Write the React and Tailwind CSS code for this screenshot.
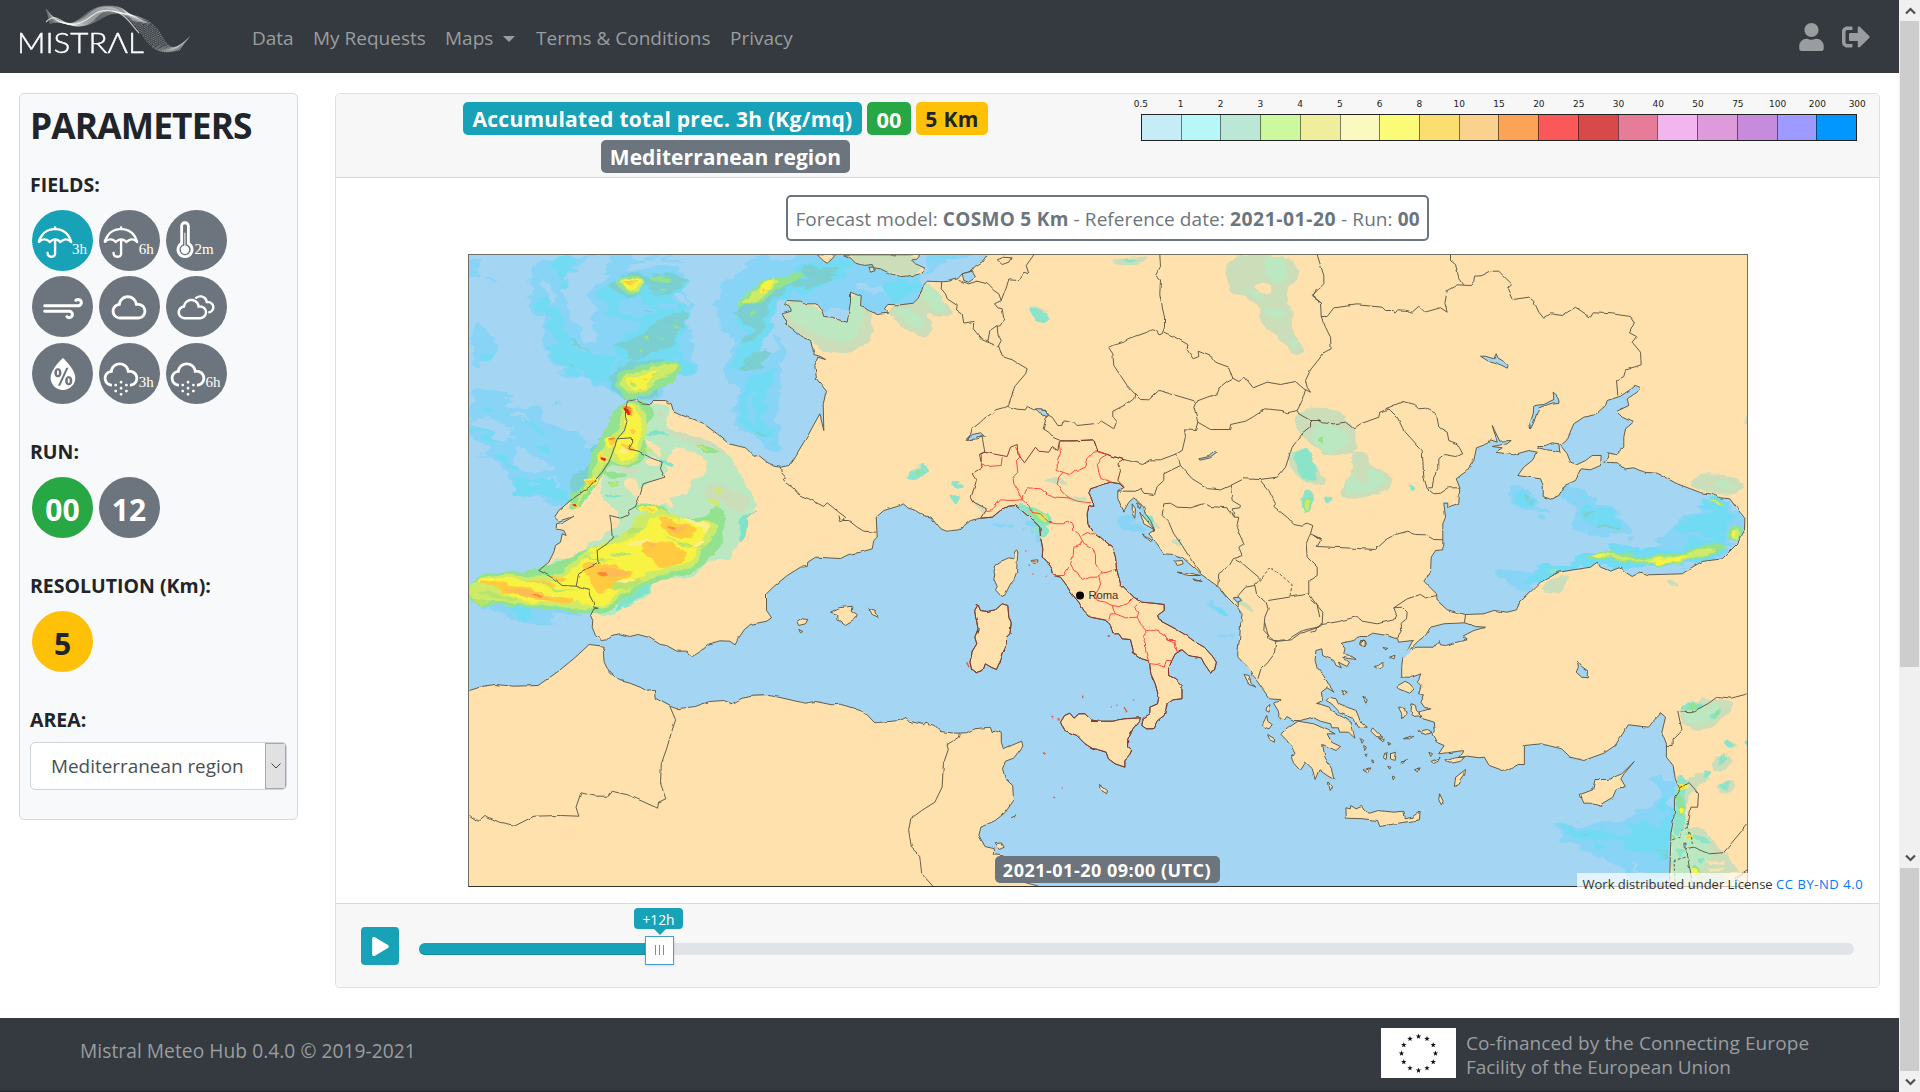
import React from "react";
import { FaUser, FaSignOutAlt, FaPlay } from "react-icons/fa";
import {
  WiUmbrella,
  WiThermometer,
  WiStrongWind,
  WiCloud,
  WiCloudy,
  WiSnow,
  WiHumidity,
} from "react-icons/wi";

/* Chart sheets: origin x, origin y, units per pixel in x and y */
const SHEETS = {
  A: [460, 250, 3, 3],
  B: [880, 250, 3, 3],
  C: [1310, 250, 3, 3],
  D: [460, 600, 2.45, 3],
  E: [1090, 560, 2.24, 3],
};

/* "B 10,20 30,40 C 5,6" -> a list of map points; a letter switches the sheet */
function points(text) {
  let s = SHEETS.A;
  const out = [];
  for (const t of text.trim().split(/\s+/)) {
    if (SHEETS[t]) s = SHEETS[t];
    else {
      const [x, y] = t.split(",").map(Number);
      out.push([s[0] + x / s[2], s[1] + y / s[3]]);
    }
  }
  return out;
}
const line = (t) => "M" + points(t).map((p) => p[0].toFixed(1) + " " + p[1].toFixed(1)).join("L");
const area = (t) => line(t) + "Z";
function blob(t) {
  const p = points(t);
  const mid = (a, b) => ((a[0] + b[0]) / 2).toFixed(1) + " " + ((a[1] + b[1]) / 2).toFixed(1);
  let d = "M" + mid(p[p.length - 1], p[0]);
  p.forEach((q, i) => {
    d += "Q" + q[0].toFixed(1) + " " + q[1].toFixed(1) + " " + mid(q, p[(i + 1) % p.length]);
  });
  return d + "Z";
}

const COAST = `B 320,13 304,35 283,48 272,62 245,70 232,85 205,92 184,94 140,92 128,105 122,125 112,145 98,158 60,163 22,162 12,175 25,188 5,190
A 1250,192 1225,180 1200,165 1202,138 1182,130 1170,125 1170,155 1160,215 1135,208 1115,200 1090,198 1080,168 1065,160 1040,160 1020,152 980,150 972,162 990,172 992,182 965,190 975,210 975,220 1000,238 1020,255 1050,270 1055,290 1062,300 1060,312 1080,318 1095,327 1072,320 1063,345 1068,385 1098,422 1088,460 1090,540 1078,490 1045,550 1030,575 1000,625 985,645 960,650 940,647 920,635 895,615 880,617 855,592 805,580 770,550 725,517 680,500 640,485 632,460 615,450 578,450 572,460 542,457 525,448 500,452 495,480 495,500 500,510 492,540 470,565 455,610 445,635 425,665 385,710 330,750 295,780 282,800 295,812 340,797 310,815 288,820 287,835 310,840 317,855 305,850 300,875 285,885 280,905 265,935 235,960 255,970 280,985 305,1005 347,1007 370,1015 385,1020 388,1035 398,1055 400,1070 413,1073 400,1075 390,1095 397,1110 395,1130 405,1155 422,1170
D 345,120 358,118 370,105 390,100 415,108 435,102 460,110 490,132 505,135 530,152 552,152 568,168 585,155 605,132 635,121 660,122 673,133 680,115 695,88 710,72 750,62 762,52 750,30
A 918,1080 918,1030 940,1008 980,975 1020,950 1040,948 1042,935 1065,920 1140,924 1165,912 1200,905 1235,895 1240,870 1250,860 1247,800 1270,780 1320,765
B 68,760 82,772 105,780 128,795 152,800 175,832 198,842 235,838 270,810 300,803 335,800 360,780 385,767 405,765 435,790 460,812 478,830 480,860 487,895 485,920 497,930 515,955 520,975 540,980 555,1000 570,1025 595,1055 610,1080 630,1100 680,1110 690,1125 697,1150 715,1150 725,1165 750,1168 758,1200
E 95,275 115,295 132,302 135,340 145,370 153,410 150,430 133,440 133,460 118,473 115,495 125,505 140,505 150,480 165,465 172,430 185,418 205,415 205,375 190,355 175,345 175,325 182,300 190,280 205,268 220,285 248,292 255,310 268,335 278,328 282,305 272,285 255,260 235,245 215,225 190,205 155,180 150,165 165,150 165,132 140,128 115,125
B 760,1040 720,1000 708,955 705,920 695,890 665,865 635,840 622,820 620,790 625,765 637,768 635,750 625,730 630,715 645,710 690,695 718,700 730,712 712,720 712,745 730,782 745,755 760,742 775,755 790,770 795,790 810,810 822,838 805,850 830,880 850,910 880,912 905,920 960,970 1015,1010 1040,1040 1070,1070 1085,1090 1080,1120 1078,1160 1072,1200
E 330,290 345,310 358,330 362,345 372,360 385,385 402,415 427,418 410,428 420,450 425,475 435,478 440,468 455,480 470,480 498,470 515,482 538,490 540,502 555,502 558,515 578,515 592,533 585,490 565,470 540,452 535,440 508,428 520,420 517,395 530,382 545,395 535,375 522,345 508,325 503,300 505,270 518,265 520,285 545,300 550,315 562,322 555,305 575,318 580,305 565,290 595,298 580,285 567,280 570,265 562,248 590,240 600,228 620,228 632,218 665,225 688,235 690,245 722,240 712,265 700,290 697,320 697,350 720,350 740,340 732,365 740,375 735,400 748,403 740,425 748,440 760,445 735,455 745,475 770,485 772,510 765,520 775,545 792,555 780,580 800,577 835,570 825,590 845,587 870,592 882,590 893,615 930,633 958,612 972,612 972,555 1010,550 1055,565 1075,590 1105,600 1150,578 1175,555 1205,493 1250,500 1262,480 1278,458 1288,470 1280,515 1290,550 1290,590 1305,615 1310,655 1320,690 1308,715 1308,760 1300,820 1297,978`;

const AFRICA = `D 22,270 55,257 85,252 130,257 190,255 240,212 280,172 315,132 352,137 350,155 352,185 365,218 390,240 415,248 440,260 455,270 475,266 477,293 515,318 530,325 575,318 610,303 645,300 665,310 690,293 715,287 755,285 780,290 815,300 845,308 870,303 910,313 930,311 960,322 990,335 1015,367 1075,360 1090,350 1100,362 1135,373 1140,365 1160,375 1175,393 1210,398 1240,397 1258,385 1298,380 1303,397 1310,388 1325,395 1325,425 1330,445 1375,422 1378,437 1355,473 1335,482 1328,505 1335,535 1353,555 1355,600 1335,635 1310,660 1275,680 1270,705 1285,738 1308,745 1308,760 1330,763 1345,830 1370,842 1420,858`;

const BLACK_SEA = `C 465,1092 410,1078 380,1050 378,1030 340,992 360,965 362,920 375,900 397,898 397,820 405,800 400,755 412,755 412,770 445,758 448,712 437,685 470,660 490,630 498,592 535,578 540,568 560,575 545,525 568,572 602,570 590,580 545,588 575,592 555,605 610,613 655,600 680,605 665,630 640,650 622,675 655,680 690,685 698,705 698,738 720,746 745,735 762,705 795,690 812,655 840,658 870,645 872,615 845,615 825,630 800,642 780,635 770,610 750,585 768,570 790,520 820,500 855,492 885,465 890,450 930,437 955,420 972,405 988,412 980,425 950,445 955,465 918,483 935,500 968,515 945,535 940,560 940,590 915,612 890,607 895,620 882,635 920,637 945,655 970,652 1000,665 1040,668 1100,700 1140,715 1175,728 1200,730 1230,742 1258,745 1280,775 1303,803 1302,840 1280,880 1235,925 1175,933 1145,950 1115,970 1015,973 990,965 965,978 945,965 930,950 900,962 870,950 860,935 840,950 745,965 690,995 628,1055 618,1078 590,1085 550,1080 520,1090`;

const WATERS = [
  "C 462,1117 400,1120 360,1130 345,1155 325,1170 300,1195 320,1190 350,1190 368,1190 385,1170 390,1183 405,1185 450,1172 470,1168 455,1158 490,1140 525,1130 495,1128",
  "C 510,317 525,317 550,325 557,310 562,322 580,333 593,345 590,353 575,345 550,335 530,330",
  "C 728,425 740,435 746,455 725,458 685,472 668,520 660,535 658,520 668,490 670,465 700,462 730,447",
  "C 682,585 705,585 725,577 745,580 748,605 730,600 705,598 685,592",
  "B 465,475 480,475 503,495 497,501 480,490",
  "B 258,565 275,552 300,547 315,560 290,558 268,568",
  "B 955,625 985,618 1003,603 1010,607 990,622 958,629",
  "E 1090,302 1100,318 1115,332 1115,352 1100,350 1088,335 1093,320",
  "B 1058,1042 1075,1040 1083,1050 1070,1055",
  "E 1329,848 1334,848 1334,864 1330,862",
  "B 245,70 275,62 285,80 265,95 250,90",
];

const ISLANDS = [
  "A 1150,13 1170,22 1185,38 1210,45 1235,42 1240,52 1260,55 1290,70 B 62,78 100,75 125,68 132,52 105,40 92,28 108,27 120,13",
  "A 1225,50 1238,50 1243,58 1230,62",
  "A 1070,13 1078,20 1090,32 1100,38 1112,28 1125,13",
  "B 408,898 412,905 408,965 400,990 390,1000 375,1030 366,1042 345,1018 350,1008 340,985 343,970 337,965 343,945 362,932 385,922 400,925 402,905",
  "B 292,1062 300,1080 320,1083 345,1078 365,1060 382,1065 385,1100 392,1120 388,1150 378,1160 D 1337,130 1325,175 1313,207 1300,200 1286,190 1280,210 1265,217 1253,210 1248,185 1255,150 1265,130 1260,110 1268,85 1262,50 1260,30",
  "D 1470,365 1480,345 1493,338 1503,353 1515,340 1530,340 1545,358 1560,362 E 0,482 50,482 75,475 112,472 110,480 95,505 83,540 83,560 92,570 85,590 77,600 77,620 55,610 40,595 35,575 18,568 0,563 D 1552,447 1530,430 1510,405 1490,395 1478,388",
  "E 430,515 445,500 465,482 500,490 530,508 548,520 530,520 540,545 560,558 550,570 520,552 525,590 540,625 545,657 530,645 512,628 503,657 497,625 482,605 470,630 455,608 450,590 458,575 440,540 427,522",
  "E 535,410 550,415 555,430 575,440 595,450 605,485 620,500 600,500 590,475 560,458 540,430 528,420",
  "E 572,742 582,745 583,735 595,745 607,738 615,752 625,758 645,750 680,755 702,752 705,775 720,770 738,752 737,778 690,788 648,798 643,780 610,775 573,773",
  "E 1097,702 1125,688 1130,657 1160,657 1190,640 1218,603 1195,640 1188,655 1198,678 1178,685 1170,710 1145,730 1145,738 1120,728 1105,728",
  "A 1110,1085 1135,1072 1175,1067 1172,1080 1190,1092 1183,1108 1155,1125 1132,1108 1132,1092",
  "A 1225,1073 1245,1080 1253,1100 1235,1092",
  "A 1010,1115 1025,1105 1042,1107 1035,1120 1015,1125",
  "A 1015,1137 1027,1143 1020,1147",
  "E 685,378 705,362 715,370 725,385 715,398 690,385",
  "E 690,440 703,440 707,458 697,475 697,460",
  "E 720,430 728,435 730,450 745,465 722,468 718,450",
  "E 735,512 755,507 765,515 750,522",
  "E 815,678 818,650 840,627 838,645 825,672",
  "E 795,602 815,592 838,590 828,603 805,608",
  "E 782,700 790,722 786,733 780,718",
  "E 763,603 783,590 780,598 768,607",
  "E 632,502 645,520 655,530 640,528 628,512",
  "E 645,532 658,538 655,544",
  "E 703,535 722,524 715,535",
  "E 672,580 683,575 680,600 672,595",
  "E 658,582 664,580 662,597 656,592",
  "E 605,535 612,540 608,548",
  "E 612,555 618,560 614,570",
  "E 615,578 622,580 618,588",
  "E 613,628 625,622 622,635",
  "E 666,617 673,620 670,626",
  "E 726,628 736,622 732,634",
  "E 676,647 682,650 678,658",
  "E 695,610 710,597 703,606",
  "E 630,598 635,602 631,606",
  "E 666,545 673,550 668,554",
  "E 758,575 766,580 762,588",
  "E 533,665 542,678 537,690",
  "E 385,492 395,465 397,482 407,492 400,505 390,500",
  "E 395,440 402,432 400,455 393,450",
  "E 397,522 412,535 412,545 400,537",
  "E 344,342 355,345 360,370 368,380 355,372",
  "E 635,318 645,315 655,305 655,318 648,328",
  "E 670,290 682,284 680,295",
  "E 605,240 615,240 615,255 606,253",
  "E 655,261 667,264 663,270",
  "E 610,410 620,418 617,428",
  "E 563,390 575,398 568,403",
  "E 20,672 38,690 36,700 25,690",
  "B 755,760 765,775 763,803 755,790",
  "B 768,755 782,765 778,775",
  "B 778,785 822,838 790,820",
  "B 785,850 815,870 810,873",
  "B 880,932 905,930 908,940 890,945",
  "B 893,965 930,968 960,975 920,975",
  "B 940,985 965,993 945,990",
  "B 452,930 472,928 472,935 455,935",
  "D 1310,730 1325,727 1332,740 1320,747",
  "D 1350,648 1360,643 1356,652",
  "C 148,1175 160,1168 168,1178 160,1187 148,1183",
  "B 350,28 370,20 392,22 385,35 365,42",
];

const BORDERS = [
  "B 184,94 182,115 195,130 200,145 230,165 228,178 245,190 250,218 280,212 278,235 305,268 322,275 355,288 365,318 395,328 440,355 435,370 405,405 382,468",
  "B 322,275 328,240 350,225 352,250 362,270 352,290",
  "B 235,90 265,100 290,92 320,100 340,120 355,130 362,150 342,160 352,172 365,175 370,205 360,225 350,228",
  "B 362,150 385,88 415,90 430,65 445,70 437,45 460,13",
  "B 382,468 345,478 340,485 310,505 300,515 275,535 270,552 257,570 275,568 305,560 313,605 297,612",
  "B 382,468 410,476 435,478 440,468 460,478 485,475 500,492 515,500 532,525 547,525 552,508 580,515 590,525 655,518 660,510 700,535 707,517 697,505 697,482 740,460 760,445 763,430",
  "B 500,492 488,535 505,545 520,562 540,570",
  "B 838,13 840,48 825,75 840,88 838,130 845,170 852,200 852,230 845,250",
  "B 845,250 835,253 828,238 815,235 800,245 745,265 730,275 698,285 685,292 697,310 700,345 720,375 740,405 763,430 780,447 805,448 835,420 870,430 945,452",
  "B 850,245 880,258 922,282 920,298 938,325 955,318 953,302 992,318 1005,335 1045,350 1057,383 1040,392 1018,410 1010,430 980,440 948,452 940,470 952,515",
  "B 1057,383 1075,393 1093,380 1118,412 1160,395 1200,402 1245,393 1270,415 1290,425",
  "B 1275,418 1265,450 1250,480 1255,490 1290,510",
  "B 952,515 990,537 1048,537 1050,522 1095,512 1120,498 1152,475 1205,480 1220,487 1250,480",
  "B 952,515 945,540 912,538 915,558 905,600 888,610 900,645 935,685 985,715 1020,718 1050,705 1090,685 1137,687 1190,680 1215,650 1235,590 1265,550 1290,530 1290,510 1320,510 C 20,508 35,517 70,520 105,515 130,535 150,520 205,500 208,485 235,475",
  "B 888,610 840,628 808,628 787,642 740,630 680,612 652,603 640,568 575,572 540,570",
  "B 900,645 850,670 850,690 830,708 822,732 790,728 780,713 765,722 712,722",
  "B 1137,687 1165,720 1185,760 1180,768 1222,802 1240,822 1265,827 1280,818 1297,825 1290,850 1320,865 C 10,855 30,870 20,888 125,893 195,897 225,870 255,852 292,842 315,852 345,853 370,867 397,868",
  "B 1050,705 1055,750 1080,765 1078,772 1055,775 1062,800 1075,800 1068,832 1090,880 1075,890 1085,915 1058,925 1047,945 1015,970 1012,1005",
  "B 1062,800 1040,772 990,768 970,760 930,772 890,770 870,758 850,760 845,795 865,815 880,850 905,885 930,925 960,968",
  "B 1290,850 1285,860 1277,880 1280,920 1310,950 1310,975 1285,990 1285,1030",
  "B 1065,928 1090,942 1140,985 1122,1005 1095,1010 1073,1035 1073,1070",
  "B 1122,1000 1128,1030 1155,1055 1163,1075 1153,1100 1150,1140 1180,1170 1220,1168 1265,1140 1320,1128",
  "B 1163,1050 1225,1040 1285,1030 1310,1065 1318,1100",
  "C 0,1048 20,1065 37,1085 35,1122 85,1113 140,1098 155,1112 200,1120 250,1108 257,1090 250,1072 290,1045 330,1032 345,1042 378,1035",
  "C 250,1072 275,1070 290,1085 288,1105 272,1118 273,1140 258,1165",
  "C 35,1122 20,1130 15,1142 0,1145",
  "E 390,185 400,235 415,243 450,238 470,218 490,210 520,195",
  "E 415,243 412,280 395,310 382,325 375,355",
  "C 20,13 40,75 40,100 5,135 30,155 32,198 50,198 70,172 140,163 215,170 225,180 248,180 253,188 262,178 290,180 305,185 325,167 343,185 390,172 410,185 403,160 410,120 440,103 480,105 490,92 492,77 515,75 540,62 565,62 603,100 592,110 608,147 655,140 670,152 685,185 700,203 720,190 755,195 795,170 840,200 848,187 905,190 960,198 972,215 957,247 978,258 965,275 990,305 992,343 945,358 940,378 918,390 922,435",
  "C 420,13 420,30 435,42 445,82 460,103",
  "C 32,198 45,230 60,260 62,295 42,305 0,358 B 1275,390 1280,410 1290,425",
  "B 1320,112 1308,115 1297,140 1320,155",
  "C 225,475 278,453 310,462 325,475 345,473 378,490 385,530 410,545 415,570 440,580 457,610 435,618 400,612 385,625 385,655 370,680 365,712 353,712",
  "C 235,475 260,500 280,540 335,600 340,680 350,715 370,730 390,728 415,712 448,712",
  "A 960,650 962,665 975,680 968,688 1000,712 1020,735 1045,745 1090,768 1100,757 1135,785 1155,800 1150,810 1165,810 1190,830 1210,842 1247,845",
  "A 1135,795 1140,810 1155,808",
  "A 470,565 515,562 517,575 505,595 535,602 570,622 605,635 600,655 613,680 548,700 540,730 525,768 505,780 500,795 480,803 448,795 452,820 455,862 440,880 410,900 412,930 420,937 385,952 355,970 347,1007",
  "D 22,645 43,662 60,645 95,665 135,675 180,647 245,645 290,647 283,620 295,577 330,587 360,587 370,572 410,583 483,623 485,605 503,595 490,548 492,490 505,445 517,395 527,358 513,318",
  "D 1222,398 1220,410 1192,433 1195,447 1183,490 1180,560 1162,605 1130,630 1103,655 1098,690 1105,742 1125,765 1130,820 1158,858",
  "E 1472,400 1435,413 1405,408 1385,428 1345,457 1315,453 1325,508 1305,535 1305,555 1290,555",
  "E 1320,685 1340,665 1350,680 1362,700 1360,740 1345,740 1342,765 1338,800",
  "E 1335,865 1350,860 1385,880 1418,877 1472,790",
  "E 1335,865 1340,910 1350,978",
  "E 1472,930 1445,955 1472,978",
];

const DASHED = [
  "B 1145,982 1168,950 1195,968 1235,1003 1228,1038",
  "E 1122,688 1155,675 1195,680",
  "E 1338,800 1322,810 1320,830 1303,838",
  "E 1338,800 1346,830 1348,850",
  "E 1310,978 1307,900 1338,888",
];

const REGIONS = [
  "B 303,612 303,640 320,648 362,645 365,620",
  "B 405,590 420,618 408,630 412,665 398,680 400,700 412,720 425,748",
  "B 318,780 335,778 360,748 390,750 425,748 445,765 455,785 480,790 505,815 530,820",
  "B 425,748 440,712 480,715 500,730 530,740 565,742 590,752 628,757",
  "B 535,575 540,605 530,630 530,660 548,665 535,680 530,700 545,725 570,745",
  "B 548,665 565,672 580,660 598,658 615,650 622,625 640,605 655,603",
  "B 655,603 680,612 662,622 650,640 655,665 660,680 690,695",
  "B 530,820 545,820 560,812 578,822 580,838 595,850 605,870 612,880 635,890 645,915 645,940 662,968 650,980",
  "B 605,855 620,846 630,850 645,850",
  "B 605,870 598,885 580,890 578,915 570,940 580,960 590,965 605,990 630,980 650,980",
  "B 520,975 550,975 565,950",
  "B 662,968 680,965 705,957",
  "B 655,975 660,1000 655,1015 645,1030 650,1050 675,1055 695,1065 715,1068 740,1060 760,1040",
  "B 695,1065 700,1080 705,1090 690,1090 685,1108",
  "B 705,1090 735,1102 770,1100 775,1085 762,1070 780,1053",
  "B 770,1100 780,1120 790,1130 800,1140 830,1135 840,1150 865,1170 885,1180 890,1200",
  "B 800,1140 787,1160 795,1180 795,1200 E 130,302 135,310 150,312 165,320 170,300 183,300",
  "E 165,222 172,240 190,240 188,258 195,275",
];

const ITALY_EDGE = [
  "B 297,612 310,605 380,618 390,590 410,582 412,610 432,637 465,590 475,602 505,605 515,588 532,600 538,572 640,568 652,603 730,628 712,640 720,660 712,690 732,710",
  "B 297,612 305,650 275,670 288,690 280,715 272,740 280,755 318,775 300,803",
  "B 300,803 335,800 360,780 385,767 405,765 435,790 460,812 478,830 480,860 487,895 485,920 497,930 515,955 520,975 540,980 555,1000 570,1025 595,1055 610,1080 630,1100 680,1110 690,1125 697,1150 715,1150 725,1165 750,1168 758,1200 E 95,275 115,295 132,302 135,340 145,370 153,410 150,430 133,440 133,460 118,473 115,495 125,505 140,505 150,480 165,465 172,430 185,418 205,415 205,375 190,355 175,345 175,325 182,300 190,280 205,268 220,285 248,292 255,310 268,335 278,328 282,305 272,285 255,260 235,245 215,225 190,205 155,180 150,165 165,150 165,132 140,128 115,125 B 760,1040 720,1000 708,955 705,920 695,890 665,865 635,840 622,820 620,790 625,765 637,768 635,750 625,730 630,715 645,710 690,695 718,700 730,712",
];

/* Rain bands, each a colour and its blobs */
const RAIN_SEA = [
  ["#87d4f6", [
    "A 210,13 700,13 640,90 690,120 690,200 690,240 720,340 640,400 610,450 480,450 400,400 330,380 240,300 260,220 200,150",
    "A 27,190 70,220 100,270 90,340 60,350 27,330",
    "A 27,390 100,440 240,480 310,550 440,600 400,700 320,760 200,740 130,680 100,640 27,600",
    "A 760,100 880,40 990,5 1240,5 1400,60 1400,170 1240,200 1060,170 960,150 940,250 1000,330 940,440 970,600 880,590 810,490 830,400 790,370 820,260 770,200",
    "A 27,40 50,30 60,60 40,75", "A 60,60 110,90 120,110 70,90", "A 27,1040 240,1060 400,1090 260,1105 190,1120 120,1090",
    "B 0,60 60,70 130,90 150,40 300,13 240,5 120,5 130,60 110,150 0,190",
    "C 590,680 700,760 710,790 650,800 600,760", "C 740,700 820,720 960,820 990,860 900,870 800,840 780,820 830,800 740,740",
    "C 560,960 640,950 740,960 860,900 1030,900 1100,810 1180,740 1260,750 1310,810 1290,880 1230,925 1120,960 900,930 740,970 640,1030 580,990",
    "E 1250,640 1310,650 1310,978 1230,978 1130,880 1040,820 1030,790 1190,790 1290,720",
    "B 430,790 500,820 500,860 450,850", "B 330,810 400,820 390,835 340,825", "B 970,1030 1020,1050 1050,1110 1010,1100", "B 700,800 790,820 800,870 730,840", "B 760,740 800,790 830,840 790,800",
    "B 970,1145 1060,1165 1050,1180",
  ]],
  ["#a4d6f3", [
    "A 27,480 120,510 200,560 120,560 60,530", "A 150,600 300,640 260,670 170,640", "A 200,690 300,700 280,715", "A 27,560 90,600 80,620 27,590", "A 120,470 220,510 180,520", "A 60,400 120,430 90,440",
    "A 350,20 480,15 430,60 400,110 380,230 440,260 380,270 330,210 310,130", "A 470,60 560,20 620,20 560,60", "A 300,320 380,350 350,370", "A 640,120 690,150 650,170", "A 560,40 700,30 660,70",
    "A 240,80 290,130 280,180 240,120", "A 960,200 940,320 880,310 930,200", "A 1160,90 1280,100 1320,140 1220,130", "A 780,20 860,13 820,50", "A 840,220 870,190 850,260",
    "A 860,420 900,400 890,470", "C 1080,780 1160,770 1180,790 1100,800", "C 830,760 900,790 880,800",
    "E 1180,820 1260,800 1240,815", "E 1200,900 1260,930 1230,935",
  ]],
  ["#72dbf4", [
    "A 290,10 345,10 320,130", "A 210,120 270,150 300,230 370,290 480,330 420,410 330,370 240,290 310,290",
    "A 410,120 520,65 640,75 700,105 600,145 660,160 690,200 680,240 620,300 720,340 640,400 480,450 420,400 490,340 440,290 550,230 500,210 440,200",
    "A 820,190 860,130 970,60 1170,20 1150,80 990,130 940,180 940,260 830,370 810,330 860,260",
    "A 840,400 930,350 970,320 920,420 910,500 960,580 880,570 830,490",
    "A 40,300 110,310 90,350", "A 130,700 260,690 330,740 220,735", "A 300,460 320,470 290,480", "A 200,575 300,600 250,610",
    "A 27,520 130,560 110,575 40,545", "A 30,450 130,480 100,490", "A 170,500 260,540 220,545", "A 60,600 200,650 160,660",
    "B 0,90 60,80 140,95 120,130 0,150", "B 120,15 240,15 180,30",
    "C 620,720 690,750 670,780 610,760", "C 790,730 890,780 960,840 860,830 840,790", "C 1090,820 1250,770 1280,850 1110,860", "C 640,960 800,930 900,890 1080,900 1250,840 1270,890 1150,950 980,945 760,955 640,1020",
    "C 1170,740 1240,740 1290,810 1260,800 1180,770",
    "E 1280,700 1310,720 1300,900 1220,870 1140,830 1230,800 1290,790", "E 1040,795 1180,810 1240,850 1160,850 1060,830", "A 120,1050 260,1080 180,1110", "B 1010,1060 1045,1080 1040,1110 1015,1090",
  ]],
  ["#87d4f6", [
    "A 470,150 560,140 600,180 540,210 480,190", "A 580,320 660,330 640,345", "A 430,250 500,240 460,270", "A 600,170 640,150 630,190", "A 330,260 360,270 400,320 350,300", "A 870,90 920,70 900,100", "A 870,430 890,420 890,520 870,500",
  ]],
  ["#7bcfd0", [
    "A 440,280 540,270 560,230 650,200 670,170 690,215 640,240 640,280 560,300 540,340 490,330 520,300",
    "A 800,190 860,150 960,70 1160,45 1080,95 960,120 910,170 920,220 850,285 830,270 880,210",
    "A 830,340 920,300 920,330 840,365", "A 380,550 460,545 450,580", "A 440,490 500,480 480,530", "A 300,240 370,280 410,290 350,290",
    "A 560,120 640,110 620,130", "A 430,395 500,340 660,320 660,390 560,440 480,450", "A 440,90 500,60 690,90 640,120 560,110 520,145 470,120", "A 550,180 575,185 560,195", "A 310,335 330,345 325,360",
    "C 850,815 900,820 950,845 860,830", "C 640,740 670,740 670,760", "C 830,770 870,780 850,790",
    "A 880,540 930,550 900,570", "A 330,690 400,620 440,540 480,440 500,700 340,780 310,770",
    "E 1250,862 1300,870 1290,880", "E 1100,820 1140,825 1120,835",
  ]],
];

const RAIN_LAND = [
  ["#cbdeb9", [
    "A 970,150 1060,155 1100,195 1160,210 1170,120 1205,135 1240,190 1235,280 1130,315 1060,280 970,220",
    "B 10,165 130,90 180,130 230,190 170,200 140,180 160,220 140,265 60,230",
    "A 1150,5 1370,5 1400,60 1300,80 1200,45", "B -10,40 110,30 130,60 90,80 30,65",
    "B 1040,10 1230,10 1260,80 1210,130 1240,180 1230,250 1280,300 1240,320 1200,260 1140,230 1140,160 1030,120",
    "C -70,500 40,460 110,500 160,600 70,620 10,600", "C 120,600 170,600 180,650 250,670 245,715 180,730 100,750 80,720 130,660", "C 0,620 50,690 30,700 -30,690 -70,650 -60,590",
    "B 440,160 500,170 515,210 470,215", "B 680,30 780,13 810,25 730,50",
    "B 490,680 550,690 560,710 510,705", "B 520,740 620,735 620,755", "B 1030,1030 1130,1070 1110,1090",
    "C 680,1010 780,960 770,1000 740,1030", "C 1065,985 1120,1000 1090,1015", "C 1140,670 1310,680 1290,740 1150,720", "C 1290,515 1320,490 1320,520",
    "E 1320,430 1400,410 1455,430 1390,510 1320,500", "E 1310,680 1360,630 1390,650 1340,700 1320,800 1370,790 1410,870 1480,960 1350,978 1297,978", "E 1420,530 1450,550 1430,575", "E 1390,590 1430,580 1440,610 1400,650", "E 1390,680 1450,650 1440,700",
    "B 870,860 915,880 890,890", "B 790,790 850,830 820,840", "B 270,750 320,780 300,790",
  ]],
  ["#bbe8c0", [
    "A 975,155 1070,160 1120,210 1165,215 1172,125 1200,130 1210,230 1150,290 1060,245 1000,220",
    "B 130,95 190,140 200,190 150,180 120,130", "B 30,165 100,175 140,210 120,240 70,210",
    "B 1140,15 1215,15 1225,90 1180,105 1160,60", "B 1070,100 1160,140 1130,150", "B 1150,165 1220,180 1215,210 1150,190", "B 1215,260 1250,265 1250,305", "C 0,520 90,520 130,580 50,610 10,580", "C 160,640 240,680 190,720 100,740 100,690",
    "E 1335,440 1430,430 1370,495 1325,480", "C 1190,695 1280,690 1250,725",
    "A 570,455 640,465 600,530 800,590 840,680 900,770 840,800 840,890 800,930 740,930 700,990 570,980 580,1020 470,1090 400,1100 400,950 360,890 460,840 490,790 410,740 440,640 550,560 610,640 600,580 520,560 520,470",
    "A 235,965 290,920 360,930 320,960", "E 1300,700 1330,760 1350,820 1410,880 1350,950 1297,978",
  ]],
];

const CLEAR_LAND = [
  ["#ffe1ad", [
    "A 640,580 700,610 740,620 745,670 690,690 690,720 620,740 650,770 600,760 540,770 520,740 550,700 610,680 620,640",
    "A 500,680 545,690 530,740 490,720", "B 1110,95 1180,100 1170,130 1130,125", "A 560,620 610,630 600,650 550,640",
    "E 1370,900 1430,905 1400,915", "E 1400,940 1470,935 1440,960", "E 1380,925 1420,925 1400,935",
  ]],
  ["#cbdeb9", ["A 740,690 820,720 880,740 850,790 790,760 730,740", "A 560,520 740,560 820,620 740,600", "C 140,650 180,660 170,700 130,690", "A 440,640 540,650 520,680", "A 590,480 620,490 600,510"]],
  ["#7fe3cc", ["A 530,545 640,550 600,560", "A 590,625 650,640 620,650", "A 420,720 500,745 450,740", "A 440,860 480,850 460,880", "A 560,1000 600,990 500,1070 450,1090 500,1040", "A 840,790 900,780 860,800 850,880 830,860"]],
];

const RAIN_CORE = [
  ["#8be3c9", ["B 90,650 150,645 130,685 75,690", "B 200,690 258,700 230,715", "B 200,732 248,738 230,762", "B 440,170 500,175 510,205 480,215 455,200", "B 405,755 470,770 530,820 480,835 430,790", "B 455,830 505,825 500,860 470,850", "B 1245,590 1290,600 1320,690 1270,690 1240,650", "B 1260,720 1300,720 1295,785 1260,780", "C 35,730 70,735 60,760", "C 285,705 320,708 300,735", "E 1410,580 1430,590 1405,620", "E 1420,530 1445,550 1425,570", "E 1305,640 1350,660 1330,700 1335,790 1305,850", "E 1360,890 1385,900 1360,920", "E 1375,620 1400,640 1370,660", "E 1325,430 1370,420 1370,450 1330,455", "E 1380,460 1425,440 1400,480", "E 1400,675 1440,660 1430,690", "E 1462,545 1475,540 1475,570", "E 1300,860 1330,870 1320,900", "E 1340,815 1400,840 1370,850", "C 710,960 750,960 730,975", "B 785,785 825,798 825,825 795,810", "B 720,22 780,22 745,38"]],
  ["#92e28f", [
    "A 455,95 520,70 560,95 530,140 480,120", "A 555,82 600,72 650,100 600,95", "A 820,180 850,140 890,105 950,75 1050,70 1000,90 960,110 900,160",
    "A 455,400 490,360 600,330 670,340 650,385 580,430 500,450", "A 475,450 565,455 590,490 540,530 570,590 530,650 460,640 430,660 400,725 340,785 310,765 380,690 380,640 430,540",
    "A 27,970 150,965 300,940 350,900 420,890 500,870 470,870 600,790 520,780 520,760 610,765 640,800 740,810 760,760 800,780 780,900 700,970 550,1000 430,1100 300,1080 120,1060 27,1065",
    "A 690,580 760,590 790,610 720,605", "A 420,665 500,670 500,685 430,680", "A 430,690 490,700 460,710", "C 810,920 890,895 1000,925 1100,905 1250,870 1240,900 1080,950 960,935 860,925", "C 1180,750 1225,745 1260,775", "C 1250,830 1300,820 1290,870 1250,870",
    "B 430,780 480,780 515,815 480,820", "B 1265,745 1290,745 1290,780 1265,780", "E 1335,430 1365,430 1360,450 1340,450", "E 1390,455 1415,450 1400,475", "E 1310,700 1325,710 1335,765 1310,760",
    "B 102,652 128,657 115,682", "E 1298,825 1312,828 1305,845", "E 1325,820 1360,825 1350,845", "E 1340,915 1370,925 1360,950",
    "A 550,260 575,265 560,278", "A 630,220 660,225 650,235", "A 600,265 620,268 610,273", "A 590,110 620,115 600,128", "A 870,180 890,185 870,200", "A 530,295 545,300 535,308", "C 25,560 40,560 35,585",
  ]],
  ["#cdea68", [
    "A 465,95 510,80 560,92 530,135", "A 845,165 880,120 940,85 960,95 920,125 870,165", "A 470,400 520,360 640,335 650,360 560,420 500,435",
    "A 480,455 555,465 560,540 550,600 510,645 460,635 450,620 420,665 385,720 335,775 385,690 440,560 485,530",
    "A 27,980 160,970 280,985 370,900 460,870 560,780 600,770 700,820 750,810 780,830 730,900 690,960 540,990 430,1080 290,1070 120,1050 27,1050",
    "A 730,735 780,755 770,775", "A 755,712 805,720 780,732", "A 440,695 480,700 460,705", "C 825,917 880,903 940,920 1000,930 1100,915 1230,885 1160,925 1080,942", "B 450,780 475,780 508,812 480,812", "C 1258,835 1283,828 1290,865 1262,868", "C 1190,750 1220,750 1250,772",
    "B 1268,752 1287,752 1285,777 1270,777", "A 695,585 760,600 720,600", "A 600,600 630,615 610,615", "A 550,590 590,595 570,605",
  ]],
  ["#f8f243", [
    "A 475,95 510,82 550,93 520,125", "A 885,127 920,95 950,90 925,120", "A 490,400 530,370 600,350 570,390 540,425 500,410", "A 485,455 535,475 545,560 530,620 480,630 455,590 500,540",
    "A 27,985 150,980 270,1010 350,940 450,880 530,860 570,800 620,800 720,820 750,820 720,880 690,940 540,970 500,1010 420,1070 330,1050 200,1060 100,1010",
    "A 520,770 600,768 590,785 540,785", "A 370,895 450,890 430,910", "C 1045,928 1080,920 1150,915 1080,938 1000,940", "C 1260,838 1282,843 1270,872", "C 845,912 895,908 870,922", "E 1305,668 1350,662 1338,687 1320,692", "E 1326,826 1358,826 1345,842", "E 1343,923 1367,930 1355,947", "E 1310,743 1334,750 1320,764",
    "A 432,550 475,565 440,610", "A 362,675 422,682 385,722", "A 322,751 362,760 340,774", "A 402,608 448,616 425,640",
  ]],
  ["#b9e46c", [
    "A 440,905 520,910 500,925 450,918", "A 600,850 690,890 760,880 720,895 660,885", "A 430,1010 490,985 570,985 480,1025", "A 40,1015 140,1035 190,1050 90,1045", "A 200,990 300,1015 370,1025 280,1018", "A 360,905 400,925 480,930 380,930", "A 500,825 560,830 510,855 490,850", "A 500,395 530,400 510,412", "A 575,365 600,372 570,378", "A 27,1045 90,1052 60,1062",
  ]],
  ["#fdf08a", [
    "A 640,800 740,815 740,850 700,820", "A 680,890 740,860 720,890", "A 480,880 560,895 620,870 560,860", "A 430,985 540,985 500,1000", "A 60,990 200,1015 330,1040 200,1030", "A 470,590 520,600 490,615",
  ]],
  ["#ffca3f", [
    "A 480,92 540,92 510,108", "A 575,798 650,810 720,840 680,870 620,850", "A 530,880 600,860 690,910 660,940 610,960 550,910", "A 350,940 450,940 540,965 450,1000 420,1050 390,990", "A 30,985 150,1000 260,1030 360,1050 280,1060 130,1025", "A 165,985 250,995 300,1010 220,1003", "A 437,555 475,562 450,595", "A 366,682 408,684 388,716", "A 475,572 535,600 500,608", "A 500,530 530,540 515,555", "A 525,415 550,410 545,420", "A 540,380 570,385 550,392", "A 260,970 330,985 300,1000", "A 530,775 590,775 570,783", "A 410,610 444,618 428,636", "A 480,458 530,485 495,495", "A 900,118 915,110 910,125", "E 1312,668 1338,674 1322,686", "E 1333,828 1350,830 1342,838",
  ]],
  ["#fdbb58", ["A 600,820 690,830 660,850", "A 400,955 460,950 520,965 450,985", "A 545,885 590,870 600,890", "A 110,1005 230,1025 300,1052 200,1045"]],
  ["#f98b2e", ["A 617,820 650,826 635,834", "A 395,963 445,966 430,982", "A 205,1026 250,1033 230,1042", "A 483,458 522,485 495,493", "A 414,614 442,621 428,634", "A 325,754 355,760 340,770", "A 440,557 467,564 450,573"]],
  ["#e0271c", ["A 487,466 514,487 494,493", "A 419,616 440,622 428,631", "A 332,756 348,760 340,765"]],
];

function Layer({ data, filter }) {
  return (
    <g filter={filter}>
      {data.map(([fill, list], i) => (
        <path key={i} fill={fill} d={list.map(blob).join("")} />
      ))}
    </g>
  );
}

const SPECKS = [
  "B 435,900 437,902", "B 445,943 448,946", "B 456,970 459,972", "B 496,975 500,977", "D 1448,347 1452,350",
  "D 1463,354 1468,356", "D 1452,590 1457,592", "D 1240,185 1246,200", "E 75,440 82,455", "D 1523,290 1526,291",
  "D 1428,455 1434,462", "E 38,225 44,228", "E 46,436 48,437", "E 58,434 60,435", "E 95,418 98,419", "D 1476,559 1478,560",
];

function WeatherMap() {
  const land = area(COAST + " E 1500,1000 1500,-940 B 320,-10");
  const africa = area(AFRICA + " D 1420,880 0,880 0,270");
  const north = ISLANDS.slice(0, 3).map(area).join("");
  return (
    <svg className="block h-[633px] w-[1280px]" viewBox="467.5 253.5 1280 633">
      <defs>
        <filter id="rough" x="-5%" y="-5%" width="110%" height="110%">
          <feTurbulence type="fractalNoise" baseFrequency="0.035 0.07" numOctaves="4" seed="4" result="n" />
          <feDisplacementMap in="SourceGraphic" in2="n" scale="26" xChannelSelector="R" yChannelSelector="G" />
        </filter>
        <filter id="fine" x="-5%" y="-5%" width="110%" height="110%">
          <feTurbulence type="fractalNoise" baseFrequency="0.06 0.09" numOctaves="3" seed="9" result="n" />
          <feDisplacementMap in="SourceGraphic" in2="n" scale="9" xChannelSelector="R" yChannelSelector="G" />
        </filter>
        <filter id="coast" x="-5%" y="-5%" width="110%" height="110%">
          <feTurbulence type="fractalNoise" baseFrequency="0.12" numOctaves="1" seed="2" result="n" />
          <feDisplacementMap in="SourceGraphic" in2="n" scale="3" xChannelSelector="R" yChannelSelector="G" />
        </filter>
        <clipPath id="dry">
          <path d={land} />
          <path d={north} />
        </clipPath>
        <clipPath id="euxine">
          <path d={area(BLACK_SEA)} />
        </clipPath>
      </defs>
      <rect x="460" y="250" width="1300" height="640" fill="#a4d6f3" />
      <Layer data={RAIN_SEA} filter="url(#rough)" />
      <g fill="#ffe1ad">
        <path d={land} />
        <path d={africa} />
        <path d={north} />
      </g>
      <g clipPath="url(#dry)">
        <Layer data={RAIN_LAND} filter="url(#fine)" />
        <Layer data={CLEAR_LAND} filter="url(#fine)" />
      </g>
      <path fill="#a4d6f3" d={area(BLACK_SEA)} />
      <g clipPath="url(#euxine)">
        <Layer data={RAIN_SEA} filter="url(#rough)" />
      </g>
      <Layer data={RAIN_CORE} filter="url(#fine)" />
      <g filter="url(#coast)" strokeWidth="0.95" strokeLinejoin="round">
        <g fill="none" stroke="#5b5646">
          <path d={line(COAST)} />
          <path d={line(AFRICA)} />
          <path d={area(BLACK_SEA)} />
          <path d={BORDERS.map(line).join("")} />
          <path d={DASHED.map(line).join("")} strokeDasharray="3 2" />
          <path d={line("C 300,1195 E 700,290")} stroke="#a4d6f3" strokeWidth="3" />
          <path d={line("C 465,1092 462,1117")} />
        </g>
        <path d={WATERS.map(area).join("")} fill="#a4d6f3" stroke="#5b5646" />
        <path d={ISLANDS.slice(3).map(area).join("")} fill="#ffe1ad" stroke="#5b5646" />
        <path d={north} fill="none" stroke="#5b5646" />
        <path d={ITALY_EDGE.map(line).join("")} fill="none" stroke="#84352b" />
        <path d={area(ISLANDS[4]) + area(ISLANDS[5])} fill="none" stroke="#84352b" />
        <path d={REGIONS.map(line).join("")} fill="none" stroke="#ff4136" />
        <path d={SPECKS.map(line).join("")} fill="none" stroke="#e0594f" strokeWidth="1.4" />
      </g>
      <circle cx="1079.5" cy="595" r="4" fill="#000" />
      <text x="1088" y="598.5" fontSize="11.2" fill="#33302a" className="font-['Liberation_Sans']">Roma</text>
      <rect x="468" y="254" width="1279" height="632" fill="none" stroke="#6f6e66" />
      <path d="M468 886H1747" stroke="#33322e" />
    </svg>
  );
}

function Logo() {
  const strands = Array.from({ length: 13 }, (_, i) => i);
  return (
    <div className="relative h-[73px] w-[232px] shrink-0">
      <svg className="absolute inset-0" width="232" height="73" viewBox="0 0 232 73" fill="none">
        <path d="M60 21C68 26 72 24 80 20C92 12 94 6 108 6.5C114 7 118 9 122 13C110 9 104 10 97 17C89 26 80 28 72 26C67 25 64 22 60 21Z" fill="#fff" fillOpacity="0.35" />
        {strands.map((i) => (
          <path
            key={i}
            d={`M${46 + i * 0.3} ${9 + i * 1.2}C${56 + i * 0.3} ${21 - i * 0.1} ${62 + i * 0.8} 26 ${74 + i * 0.4} ${22.5 + i * 0.3}C${85 + i} ${17 + i * 0.7} ${91 + i} ${5 + i * 0.7} ${110 + i * 0.5} ${6 + i * 0.6}S${124 + i * 1.1} ${14 + i * 0.3} ${134 + i * 1.2} ${21 + i * 0.2}`}
            stroke="#fff"
            strokeOpacity="0.35"
            strokeWidth="0.8"
          />
        ))}
        {strands.map((i) => (
          <path
            key={i}
            d={`M${112 + i * 0.8} ${11 + i * 0.2}C${128 + i * 0.8} ${13 + i * 0.2} ${136 + i * 1.3} ${26 - i * 0.6} ${146 + i * 1.2} ${40 - i * 0.5}S${166 + i * 0.6} 53 ${180 + i * 0.8} ${50 - i * 1.1}`}
            stroke="#fff"
            strokeOpacity="0.5"
            strokeWidth="0.9"
            strokeDasharray="1 0.9"
          />
        ))}
        <path d="M46 22C58 10 60 27 76 24S92 8 112 11c13 2 18 12 27 22" stroke="#fff" strokeOpacity="0.7" strokeWidth="1.2" />
      </svg>
      <span className="absolute left-[17px] top-[27px] origin-left scale-x-[1.16] font-['Lato'] text-[27px] leading-[31px] font-light text-white [-webkit-text-stroke:0.4px_white]">MISTRΛL</span>
    </div>
  );
}

const FIELDS = [
  [WiUmbrella, "3h", true],
  [WiUmbrella, "6h"],
  [WiThermometer, "2m"],
  [WiStrongWind],
  [WiCloud],
  [WiCloudy],
  [WiHumidity],
  [WiSnow, "3h"],
  [WiSnow, "6h"],
];

function Field({ icon: Icon, label, active }) {
  const place = label === "2m" ? "mr-[22px] mt-[3px]" : label ? "mr-[16px] mt-[3px]" : "mt-[2px]";
  return (
    <div className={"relative flex h-[61px] w-[61px] items-center justify-center rounded-full text-white " + (active ? "bg-[#17a2b8]" : "bg-[#6c757d]")}>
      <Icon className={"h-[50px] w-[50px] shrink-0 " + place} />
      {label && (
        <span className={"absolute top-[30px] font-['Liberation_Serif'] text-[15px] leading-[18px] " + (label === "2m" ? "left-[29px]" : "left-[40px]")}>{label}</span>
      )}
    </div>
  );
}

const Round = ({ className, children }) => (
  <div className={"flex h-[61px] w-[61px] items-center justify-center rounded-full pt-[4px] text-[30px] font-bold " + className}>{children}</div>
);

const Heading = ({ className, children }) => (
  <h2 className={"h-[24px] whitespace-nowrap text-[19.5px] leading-[24px] font-bold text-[#212529] " + className}>{children}</h2>
);

const SCALE = [
  ["0.5", "#c5ecf7"], ["1", "#b8f7f8"], ["2", "#bbe8d6"], ["3", "#ccf99f"], ["4", "#efee9c"], ["5", "#fafac0"],
  ["6", "#fbfb78"], ["8", "#fbde70"], ["10", "#fbd28d"], ["15", "#fba357"], ["20", "#fb5858"], ["25", "#d74a4a"],
  ["30", "#e67c97"], ["40", "#f3b5f0"], ["50", "#dd9bdb"], ["75", "#c68bdb"], ["100", "#9d9bff"], ["200", "#0098ff"],
];

function Legend() {
  return (
    <div className="mt-[5px] flex w-[716px] flex-col">
      <div className="flex h-[10px] font-['DejaVu_Sans'] text-[9px] leading-[10px] text-[#222]">
        {[...SCALE.map((s) => s[0]), "300"].map((n, i) => (
          <span key={n} className={"flex shrink-0 justify-center " + (i === 0 ? "-ml-[20px] w-[39.8px]" : "w-[39.8px]")}>{n}</span>
        ))}
      </div>
      <div className="mt-[5px] flex h-[27px] border border-[#222]">
        {SCALE.map(([n, c], i) => (
          <div key={n} className={"flex-1 " + (i ? "border-l border-black/50" : "")} style={{ backgroundColor: c }} />
        ))}
      </div>
    </div>
  );
}

const Star = ({ a }) => {
  const x = 37.5 + 17 * Math.sin((a * Math.PI) / 6);
  const y = 25.5 - 17 * Math.cos((a * Math.PI) / 6);
  const pts = Array.from({ length: 10 }, (_, i) => {
    const r = i % 2 ? 1.15 : 2.9;
    return (x + r * Math.sin((i * Math.PI) / 5)).toFixed(2) + "," + (y - r * Math.cos((i * Math.PI) / 5)).toFixed(2);
  });
  return <polygon points={pts.join(" ")} fill="#111" />;
};

const Chevron = ({ up }) => (
  <svg width="11" height="8" viewBox="0 0 11 8" fill="none" stroke="#505050" strokeWidth="2.2">
    <path d={up ? "M1 6.5L5.5 2L10 6.5" : "M1 1.5L5.5 6L10 1.5"} />
  </svg>
);

export default function App() {
  return (
    <div className="flex h-[1092px] w-[1920px] overflow-hidden bg-white font-['Open_Sans',sans-serif] text-[19px]">
      <div className="flex w-[1899px] flex-col">
        <header className="flex h-[73px] shrink-0 items-center bg-[#343a40] text-[#9a9d9f]">
          <Logo />
          <nav className="flex h-[73px] flex-1 items-center whitespace-nowrap pl-5 pt-[4px] text-[19px]">
            <span className="w-[61px]">Data</span>
            <span className="w-[132px]">My Requests</span>
            <span className="flex w-[91px] items-center">
              Maps
              <svg className="ml-[10px]" width="12" height="6"><path d="M0 0H12L6 6Z" fill="#9a9d9f" /></svg>
            </span>
            <span className="w-[194px]">Terms &amp; Conditions</span>
            <span>Privacy</span>
          </nav>
          <div className="flex items-center gap-[18px] pr-[29px]">
            <FaUser className="h-[28px] w-[25px]" />
            <FaSignOutAlt className="h-[28px] w-[28px]" />
          </div>
        </header>

        <div className="flex h-[945px] shrink-0 items-start pl-[19px] pt-[20px]">
          <aside className="flex h-[727px] w-[279px] shrink-0 flex-col rounded-[5px] border border-[#d7dadd] bg-[#f8f9fa] px-[10px]">
            <h1 className="mt-[9px] h-[44px] whitespace-nowrap text-[35.3px] leading-[44px] font-bold tracking-[-0.85px] text-[#212529]">PARAMETERS</h1>
            <Heading className="mt-[26px]">FIELDS:</Heading>
            <div className="ml-[2px] mt-[13px] grid w-[195px] grid-cols-3 gap-x-[5.3px] gap-y-[5.3px]">
              {FIELDS.map(([icon, label, active], i) => (
                <Field key={i} icon={icon} label={label} active={active} />
              ))}
            </div>
            <Heading className="mt-[36px]">RUN:</Heading>
            <div className="ml-[2px] mt-[13px] flex gap-[5.5px] text-white">
              <Round className="bg-[#28a745]">00</Round>
              <Round className="bg-[#6c757d]">12</Round>
            </div>
            <Heading className="mt-[36px]">RESOLUTION (Km):</Heading>
            <div className="ml-[2px] mt-[13px] flex">
              <Round className="bg-[#ffc107] text-[#212529]">5</Round>
            </div>
            <Heading className="mt-[36px]">AREA:</Heading>
            <div className="mt-[10px] flex h-[48px] w-[257px] overflow-hidden rounded-[5px] border border-[#ced4da] bg-white">
              <span className="flex flex-1 items-center whitespace-nowrap pl-[20px] pt-px text-[18.9px] text-[#495057]">Mediterranean region</span>
              <span className="flex w-[21px] items-center justify-center border border-[#a8a8a8] bg-[#e1e1e1]">
                <svg width="10" height="6" fill="none" stroke="#444" strokeWidth="1"><path d="M.5 .5L5 5L9.5 .5" /></svg>
              </span>
            </div>
          </aside>

          <main className="ml-[37px] flex h-[895px] w-[1545px] shrink-0 flex-col rounded-[5px] border border-[#dfdfdf] bg-white">
            <div className="flex h-[84px] shrink-0 justify-between rounded-t-[5px] border-b border-[#d8d8d8] bg-[#f7f7f7] pr-[22px]">
              <div className="ml-[127px] mt-[8px] flex w-[525px] flex-col items-center gap-[5px] text-[21px] leading-[35px] font-bold text-white">
                <div className="flex gap-[5px] whitespace-nowrap">
                  <span className="flex h-[33px] w-[399px] justify-center rounded-[5px] bg-[#17a2b8] tracking-[0.27px]">Accumulated total prec. 3h (Kg/mq)</span>
                  <span className="flex h-[33px] w-[44px] justify-center rounded-[5px] bg-[#28a745] text-[21.8px]">00</span>
                  <span className="flex h-[33px] w-[72px] justify-center rounded-[5px] bg-[#ffc107] tracking-[0.4px] text-[#212529]">5 Km</span>
                </div>
                <span className="flex h-[33px] w-[249px] justify-center rounded-[5px] bg-[#6c757d] whitespace-nowrap tracking-[0.05px]">Mediterranean region</span>
              </div>
              <Legend />
            </div>

            <div className="flex h-[725px] shrink-0 flex-col items-center">
              <div className="mt-[17px] flex h-[46px] w-[643px] shrink-0 items-center justify-center rounded-[5px] border-2 border-[#6c757d] whitespace-pre pt-[2px] text-[19px] tracking-[0.08px] text-[#6c757d]">
                Forecast model: <b className="tracking-[0.3px]">COSMO 5 Km</b> - Reference date: <b className="text-[19.4px] tracking-[0.5px]">2021-01-20</b> - Run: <b>00</b>
              </div>
              <div className="relative mt-[13px]">
                <WeatherMap />
                <span className="absolute left-[527px] top-[602px] flex h-[27px] w-[225px] justify-center rounded-[5px] bg-[#6c757d] text-[18px] leading-[29px] font-bold tracking-[0.5px] whitespace-nowrap text-white">2021-01-20 09:00 (UTC)</span>
                <span className="absolute left-[1109px] top-[619px] flex h-[19px] w-[294px] items-center whitespace-pre bg-white/70 pl-[6px] pt-[4px] text-[13px] text-[#333]">
                  Work distributed under License <span className="tracking-[0.55px] text-[#0078ff]">CC BY-ND 4.0</span>
                </span>
              </div>
            </div>

            <div className="flex flex-1 items-center rounded-b-[5px] border-t border-[#d8d8d8] bg-[#f7f7f7] pl-[25px] pt-px">
              <span className="flex h-[38px] w-[38px] items-center justify-center rounded-[4px] bg-[#17a2b8] text-white">
                <FaPlay className="h-[19px] w-[17px]" />
              </span>
              <div className="relative ml-[20px] mt-[5px] h-[12px] w-[1435px] rounded-[6px] bg-[#e0e4e9]">
                <div className="h-[12px] w-[230px] rounded-l-[6px] border-b border-[#148ea1] bg-[#17a2b8]" />
                <div className="absolute left-[226px] top-[-7px] flex h-[29px] w-[29px] items-center justify-center gap-[3px] border border-[#45a0cb] bg-white shadow-sm">
                  <i className="h-[10px] w-px bg-[#45a0cb]" />
                  <i className="h-[10px] w-px bg-[#45a0cb]" />
                  <i className="h-[10px] w-px bg-[#45a0cb]" />
                </div>
                <div className="absolute left-[215px] top-[-35px] flex h-[21px] w-[49px] justify-center rounded-[4px] bg-[#17a2b8] text-[13.8px] leading-[23px] text-white">+12h</div>
                <svg className="absolute left-[235px] top-[-14px]" width="12" height="6"><path d="M0 0H12L6 6Z" fill="#17a2b8" /></svg>
              </div>
            </div>
          </main>
        </div>

        <footer className="flex h-[74px] shrink-0 items-start justify-between border-b-2 border-[#2b3036] bg-[#343a40] text-[#9a9d9f]">
          <span className="pl-[80px] pt-[19px] text-[19.2px] leading-[28px] tracking-[0.05px] whitespace-nowrap">Mistral Meteo Hub 0.4.0 © 2019-2021</span>
          <div className="flex w-[518px] gap-[10px] pt-[10px]">
            <svg width="75" height="50" className="shrink-0 bg-white">
              {Array.from({ length: 12 }, (_, a) => <Star key={a} a={a} />)}
            </svg>
            <div className="pt-[3px] text-[19px] leading-[24px] tracking-[0.1px] whitespace-nowrap">
              Co-financed by the Connecting Europe
              <br />
              <span className="tracking-[-0.04px]">Facility of the European Union</span>
            </div>
          </div>
        </footer>
      </div>

      <div className="flex w-[21px] flex-col bg-[#f0f0f0] pl-px">
        <div className="flex h-[21px] shrink-0 items-center justify-center"><Chevron up /></div>
        <div className="h-[646px] w-[19px] shrink-0 bg-[#cdcdcd]" />
        <div className="flex h-[201px] shrink-0 items-end justify-center pb-[6px]"><Chevron /></div>
        <div className="h-[203px] w-[19px] shrink-0 bg-[#cdcdcd]" />
        <div className="flex h-[21px] shrink-0 items-center justify-center"><Chevron /></div>
      </div>
    </div>
  );
}
